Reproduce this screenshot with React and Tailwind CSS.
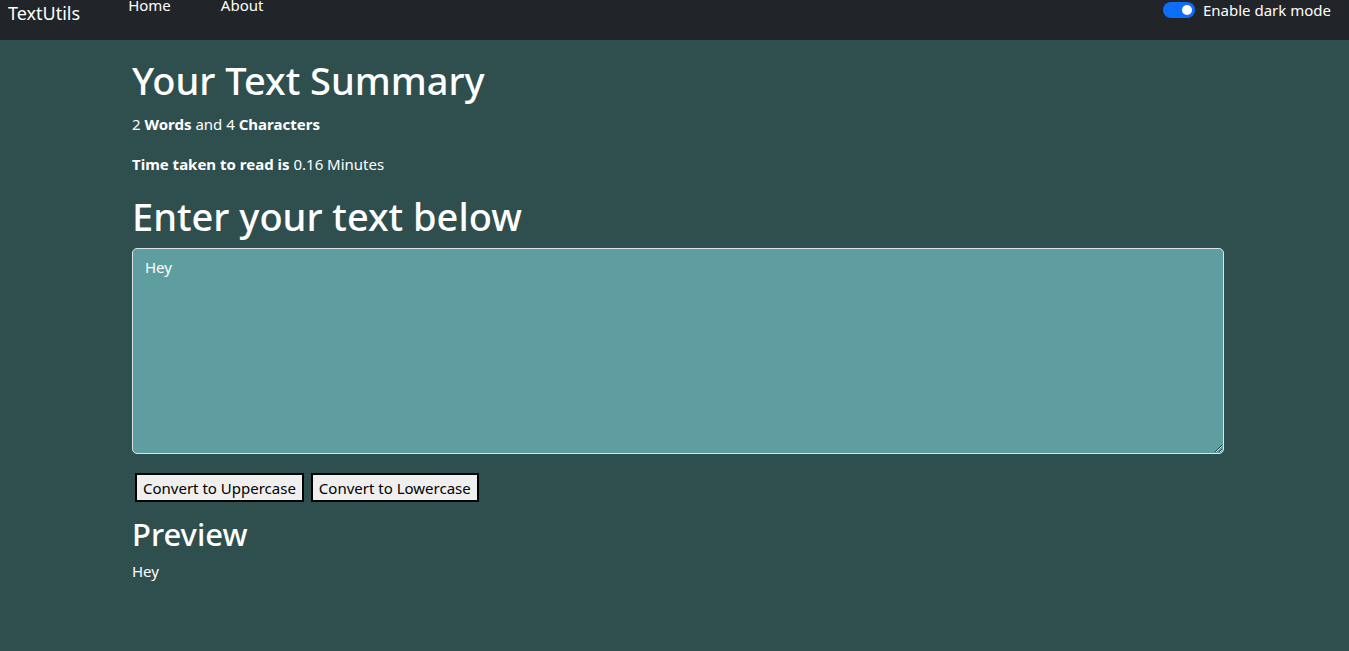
import React, { useState } from 'react';

const font = { fontFamily: '"Noto Sans", "Open Sans", sans-serif' };

function Navbar() {
  return (
    <nav className="h-10 bg-[#212529] flex items-start text-white">
      <a className="ml-2 mt-[-2px] text-[18px] leading-[30px]">TextUtils</a>
      <ul className="flex ml-[40px] -mt-[7px]">
        <li className="px-2 text-[15px] leading-6">Home</li>
        <li className="ml-[34px] px-2 text-[15px] leading-6">About</li>
      </ul>
      <div className="ml-auto mr-[18px] -mt-[2px] flex items-center gap-2">
        <span className="w-8 h-4 rounded-full bg-[#0d6efd] flex items-center justify-end px-[3px]">
          <span className="w-[10px] h-[10px] rounded-full bg-white" />
        </span>
        <span className="text-[15px] leading-6">Enable dark mode</span>
      </div>
    </nav>
  );
}

export default function App() {
  const [text, setText] = useState('Hey');
  const words = text.split(/\s+/).filter(Boolean).length;
  return (
    <div className="min-h-[651px] bg-[#2f4f4f] text-white" style={font}>
      <Navbar />
      <div className="ml-[132px] w-[1092px] pt-4">
        <h1 className="text-[38px] leading-[48px] font-medium mb-2">Your Text Summary</h1>
        <p className="text-[15px] leading-6 mb-4">
          {words + 1} <b>Words</b> and {text.length + 1} <b>Characters</b>
        </p>
        <p className="text-[15px] leading-6 mb-4">
          <b>Time taken to read is</b> 0.16 Minutes
        </p>
        <h1 className="text-[38px] leading-[48px] font-medium mb-2">Enter your text below</h1>
        <textarea
          value={text}
          onChange={(e) => setText(e.target.value)}
          className="block w-full h-[206px] rounded-[5px] border border-[#dee2e6] bg-[#5f9ea0] text-white px-3 py-[6px] text-[15px] leading-6 outline-none"
          style={font}
        />
        <div className="mt-[19px] flex gap-[7px] pl-[3px]">
          <button className="h-[29px] border-2 border-black bg-[#efefef] text-black px-[6px] text-[15px] leading-5">
            Convert to Uppercase
          </button>
          <button className="h-[29px] border-2 border-black bg-[#efefef] text-black px-[6px] text-[15px] leading-5">
            Convert to Lowercase
          </button>
        </div>
        <h2 className="mt-[13px] text-[31px] leading-[38px] font-medium mb-[6px]">Preview</h2>
        <p className="text-[15px] leading-6">{text}</p>
      </div>
    </div>
  );
}
